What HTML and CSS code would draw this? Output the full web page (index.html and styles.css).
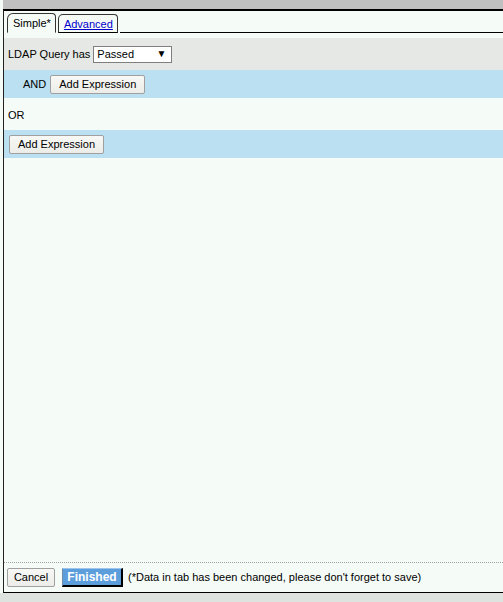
FILE: index.html
```html
<!DOCTYPE html>
<html>
<head>
<meta charset="utf-8">
<title>Expression Editor</title>
<link rel="stylesheet" href="styles.css">
</head>
<body>
<div class="topbar"></div>
<div class="panel">
  <div class="tabs">
    <div class="tab active">Simple*</div>
    <div class="tab"><a href="#">Advanced</a></div>
    <div class="tab-fill"></div>
  </div>
  <div class="content">
    <div class="row row-gray">
      <span class="label">LDAP Query has</span>
      <div class="select"><span>Passed</span><span class="arrow">&#9660;</span></div>
    </div>
    <div class="row row-blue indent">
      <span class="label and">AND</span>
      <button class="btn">Add Expression</button>
    </div>
    <div class="row row-plain">
      <span class="label">OR</span>
    </div>
    <div class="row row-blue">
      <button class="btn">Add Expression</button>
    </div>
    <div class="spacer"></div>
    <div class="footer">
      <button class="btn cancel">Cancel</button>
      <button class="btn finished">Finished</button>
      <span class="note">(*Data in tab has been changed, please don't forget to save)</span>
    </div>
  </div>
</div>
<div class="bottombar"></div>
</body>
</html>
```

FILE: styles.css
```css
html, body {
  margin: 0;
  padding: 0;
  height: 100%;
}

body {
  background: #f5fbf7;
  font-family: "Liberation Sans", Arial, sans-serif;
  font-size: 11px;
  color: #000;
  display: flex;
  flex-direction: column;
}

.topbar {
  height: 9px;
  margin-left: 3px;
  background: #c0c0c0;
}

.panel {
  flex: 1;
  margin-left: 3px;
  border-left: 1px solid #222;
  border-top: 2px solid #000;
  border-bottom: 1px solid #000;
  display: flex;
  flex-direction: column;
}

.bottombar {
  height: 9px;
  background: #dfe3df;
}

/* tab strip */
.tabs {
  display: flex;
  align-items: flex-end;
  height: 21px;
  padding-top: 1px;
  padding-left: 3px;
}

.tab {
  height: 17px;
  line-height: 18px;
  padding: 0 4px 0 5px;
  border: 1px solid #333;
  border-bottom: 1px solid #000;
  border-radius: 5px 4px 0 0;
  margin-right: 2px;
  white-space: nowrap;
}

.tab.active {
  border-bottom-color: transparent;
  padding: 0 4px 0 5px;
  height: 18px;
  border-radius: 6px 4px 0 0;
}

.tab a {
  color: #0000cc;
  text-decoration: underline;
}

.tab-fill {
  flex: 1;
  border-bottom: 1px solid #000;
}

.content {
  flex: 1;
  display: flex;
  flex-direction: column;
  padding-top: 5px;
}

.row {
  display: flex;
  align-items: center;
  padding-left: 4px;
}

.row-gray {
  background: #e5e8e4;
  height: 32px;
}

.row-blue {
  background: #bbe0f1;
  height: 28px;
  padding-left: 5px;
}

.row-blue.indent {
  padding-left: 19px;
}

.row-plain {
  height: 32px;
  padding-top: 2px;
  box-sizing: border-box;
}

.label {
  margin-right: 3px;
  white-space: nowrap;
}

.label.and {
  margin-right: 4px;
}

.select {
  height: 15px;
  border: 1px solid #7f7f7f;
  background: #fff;
  display: flex;
  align-items: center;
  justify-content: space-between;
  padding: 0 5px 0 3px;
  box-sizing: content-box;
  width: 69px;
  font-size: 11px;
}

.select .arrow {
  font-size: 10px;
  line-height: 10px;
}

.btn {
  font-family: "Liberation Sans", Arial, sans-serif;
  font-size: 11px;
  height: 19px;
  padding: 0;
  background: linear-gradient(#f8f8f6, #ecece8);
  border: 1px solid #a0a0a0;
  border-radius: 2px;
  color: #000;
  margin: 0;
  white-space: nowrap;
}

.row-blue .btn {
  width: 95px;
}

.spacer {
  flex: 1;
}

.footer {
  border-top: 1px dotted #a0a4a0;
  display: flex;
  align-items: center;
  height: 28px;
  padding-left: 3px;
  padding-bottom: 1px;
}

.btn.cancel {
  width: 48px;
  margin-right: 7px;
}

.btn.finished {
  width: 61px;
  background: #5c9edc;
  color: #fff;
  font-weight: bold;
  border: none;
  border-right: 2px solid #000;
  border-bottom: 2px solid #000;
  border-left: 1px solid #6c8cac;
  border-top: 1px solid #9cc4ec;
  border-radius: 0;
  margin-right: 5px;
  font-size: 12px;
}

.note {
  font-size: 11px;
  white-space: nowrap;
}
```
